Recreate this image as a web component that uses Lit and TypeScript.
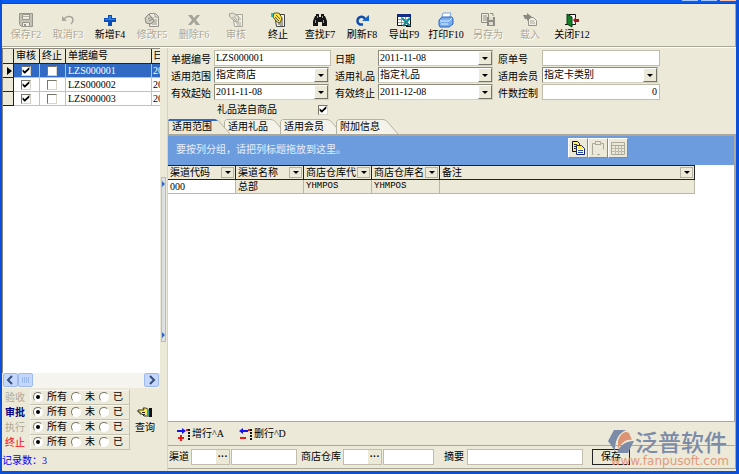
import { LitElement, html, css, svg } from "lit";
import { customElement, property, state } from "lit/decorators.js";
import { classMap } from "lit/directives/class-map.js";

const icons: Record<string, unknown> = {
  save: svg`<path d="M1.500 1.500h13v13h-11l-2-2z" fill="#c4c2b6" stroke="#98968a"/><path d="M4.500 2.500h7v5h-7z" fill="#efede2" stroke="#98968a"/><path d="M5 4.500h6" stroke="#b5b3a8"/><path d="M4.500 10.500h7v4h-7z" fill="#efede2" stroke="#98968a"/><path d="M6 12h2v2H6z" fill="#98968a"/>`,
  undo: svg`<path d="M4 7c3-4 9-3 9 1 0 2-1 3-2 4" fill="none" stroke="#a9a79b" stroke-width="1.500"/><path d="M2 4v5h5z" fill="#a9a79b"/>`,
  add: svg`<path d="M6 3h4v3h4v4h-4v4H6v-4H2V6h4z" fill="#0a4fb8"/><path d="M7 4h2v3h4v1H3V7h4z" fill="#2f80ea"/>`,
  edit: svg`<path d="M5.500 1.500h6l3 3v10h-9z" fill="#f0eee4" stroke="#96948a"/><path d="M11 2v3h3M7 6h3M9 8h4M8 10h5M8 12h5" stroke="#96948a" fill="none"/><path d="M1 6l4-4 5 7-3 3-5-1z" fill="#cfcdc2" stroke="#8f8d83"/><path d="M4 7l4-2M5 9l4-2" stroke="#8f8d83"/>`,
  del: svg`<path d="M2 3h4l2 3 3-3h3l-4 5 4 5h-4l-2-3-3 3H2l4-5z" fill="#a6a499"/>`,
  audit: svg`<path d="M4.500 2.500h10v12h-8z" fill="#f0eee4" stroke="#aaa89d"/><path d="M1 2l4-1 6 4-1 5-4-1-4-4z" fill="#e4e2d6" stroke="#a5a398"/><path d="M6 4l3 4M4 5l4 4M8 11h5M11 7h2M9 13h4" stroke="#aaa89d"/>`,
  stop: svg`<path d="M4.500 2.500h10v12h-8z" fill="#f4f2e8" stroke="#444"/><path d="M1 1h4v4H1z" fill="#20c8c8"/><path d="M4 1h5l3 5-2 5-3-1-4-5z" fill="#ffe43c" stroke="#3b3608" stroke-width=".8"/><path d="M6 3l4 4M5 5l4 4M8 12h5M12 6v5M10 14h3" stroke="#555"/>`,
  find: svg`<path d="M3 4h1V2h3v3h2V2h3v2h1l2 5v5h-5v-4H6v4H1V9z" fill="#161616"/><path d="M3.500 8v3M11.500 8v3M5.500 4v2M10.500 4v2" stroke="#999"/>`,
  refresh: svg`<path d="M9 12.500H6A4 4 0 1 1 11 7" fill="none" stroke="#0b4db0" stroke-width="2.600"/><path d="M8 9h7V3z" fill="#1763cf"/>`,
  export: svg`<path d="M1.500 2.500h13v11h-13z" fill="#fff" stroke="#111"/><path d="M1 2h14v3H1z" fill="#142a86"/><path d="M2 7.500h12M2 10.500h8M5.500 5v8M9.500 5v7" stroke="#999"/><path d="M6 6l8 8M14 6l-7 8" stroke="#078f9c" stroke-width="2"/><path d="M10 14.500h5" stroke="#111"/>`,
  print: svg`<path d="M5 1h8l-2 6H3z" fill="#fff" stroke="#77a7e8"/><path d="M1 8l3-3h10l1 2v5l-4 3H2l-1-2z" fill="#78aef1" stroke="#2d65bc"/><path d="M2 9h9l3-3M3 12h7" fill="none" stroke="#e3efff"/>`,
  saveas: svg`<path d="M1.500 1.500h7v9h-7z" fill="#eae8dc" stroke="#8f8d83"/><path d="M3 4h4M3 6h4M3 8h4" stroke="#9a988d"/><path d="M7 5h8v9H7z" fill="#8f8d83"/><path d="M9 5h4v3H9zM9 10h4v3H9z" fill="#dedccf"/><path d="M10 1.500h3V4" fill="none" stroke="#8f8d83"/>`,
  load: svg`<path d="M6.500 5.500h5l3 3v5h-8z" fill="#efede2" stroke="#96948a"/><path d="M8 9h4M8 11h5" stroke="#aaa89d"/><path d="M1 3h4V1l5 4-5 4V7H3z" fill="#8b897f"/>`,
  close: svg`<path d="M4.500 2.500h7v10h-9M1 12.500h3" fill="#fff" stroke="#111"/><path d="M3 2l5 3v10l-5-3z" fill="#138025" stroke="#073d10"/><path d="M9 8l3-3v2h3v3h-3v2z" fill="#a61420"/>`,
  hand: svg`<path d="M1 5h6l-1-2h3l3 2v6H7L5 9H3V7H1z" fill="#ffe750" stroke="#222" stroke-width=".9"/><path d="M5 7.500h3M6 9.500h2" stroke="#222"/><path d="M12 3h3v9h-3z" fill="#111"/><path d="M10 4h2v7h-2z" fill="#1fa9b4"/>`,
  rowAdd: svg`<path d="M1 4h5V2l4 3-4 3V6H1z" fill="#1414f0"/><path d="M4 9h2v2h2v2H6v2H4v-2H2v-2h2z" fill="#f01818"/><path d="M13 3v12" stroke="#111" stroke-width="2" stroke-dasharray="2 1"/><path d="M10 3h2v2h-2z" fill="#f01818"/>`,
  rowDel: svg`<path d="M10 4H5V2L1 5l4 3V6h5z" fill="#1414f0"/><path d="M2 11h6v2H2z" fill="#f01818"/><path d="M13 3v12" stroke="#111" stroke-width="2" stroke-dasharray="2 1"/><path d="M10 3h2v2h-2z" fill="#f01818"/>`,
  copy: svg`<path d="M2.500 1.500h5l2 2v8h-7z" fill="#ffee62" stroke="#111"/><path d="M4 4.500h3M4 6.500h4M4 8.500h4" stroke="#333"/><path d="M6.500 5.500h5l3 3v6h-8z" fill="#fff" stroke="#15246a"/><path d="M8 6h3l3 3h-6z" fill="#ffe94e"/><path d="M8 10.500h5M8 12.500h5" stroke="#2448b8"/>`,
  paste: svg`<path d="M3.500 14.500h-1v-11h3v-2h5v2h3v6M5 4.500h6M7 14.500h3" fill="none" stroke="#aaa89b"/>`,
  calendar: svg`<path d="M1.500 2.500h13v12h-13zM2 5.500h12" fill="none" stroke="#aaa89b"/><path d="M2 8.500h12M2 11.500h12M5.500 6v8M8.500 6v8M11.500 6v8" stroke="#bbb9ad"/>`,
};

@customElement("ui-icon")
class UiIcon extends LitElement {
  @property() name = "";
  static styles = css`
    :host { display: block; width: 16px; height: 16px; flex: none; }
    .art { display: block; width: 100%; height: 100%; }
  `;
  render() {
    return html`<svg class="art" viewBox="0 0 16 16" aria-hidden="true">${icons[this.name]}</svg>`;
  }
}

interface Field {
  id: string;
  label: string;
  value: string;
  kind: "text" | "combo" | "number";
}

@customElement("app-root")
class AppRoot extends LitElement {
  @state() tab = 0;

  tools: [string, string, boolean][] = [
    ["save", "保存F2", false], ["undo", "取消F3", false], ["add", "新增F4", true],
    ["edit", "修改F5", false], ["del", "删除F6", false], ["audit", "审核", false],
    ["stop", "终止", true], ["find", "查找F7", true], ["refresh", "刷新F8", true],
    ["export", "导出F9", true], ["print", "打印F10", true], ["saveas", "另存为", false],
    ["load", "载入", false], ["close", "关闭F12", true],
  ];

  fields: Field[] = [
    { id: "no", label: "单据编号", value: "LZS000001", kind: "text" },
    { id: "date", label: "日期", value: "2011-11-08", kind: "combo" },
    { id: "orig", label: "原单号", value: "", kind: "text" },
    { id: "scope", label: "适用范围", value: "指定商店", kind: "combo" },
    { id: "gift", label: "适用礼品", value: "指定礼品", kind: "combo" },
    { id: "member", label: "适用会员", value: "指定卡类别", kind: "combo" },
    { id: "from", label: "有效起始", value: "2011-11-08", kind: "combo" },
    { id: "to", label: "有效终止", value: "2011-12-08", kind: "combo" },
    { id: "count", label: "件数控制", value: "0", kind: "number" },
  ];

  static styles = css`
    * { box-sizing: border-box; }
    :host {
      box-sizing: border-box;
      display: flex; flex-direction: column; min-height: 100vh; position: relative;
      background: #ece9d8; color: #000; border: solid #0a50dc; border-width: 0 3px 3px 2px;
      font: 10px/14px "Liberation Serif", "Noto Sans CJK SC", sans-serif;
    }
    button, input, select { font: inherit; color: inherit; margin: 0; padding: 0; border-radius: 0; }
    button { background: none; border: 0; white-space: nowrap; }
    input, select { min-width: 0; outline: 0; }
    .title { height: 4px; background: #0a5cf0; border-bottom: 1px solid #1248b4; display: flex; justify-content: flex-end; gap: 3px; }
    .cap { width: 16px; height: 1px; background: #a9c8ff; }
    .cap.x { background: #ffc0a8; }
    .toolbar { display: flex; height: 43px; padding: 8px 0 0 3px; border-bottom: 1px solid #aca899; border-right: 1px solid #aca899; }
    .tool { width: 42px; height: 32px; display: flex; flex-direction: column; align-items: center; }
    .tool:disabled { color: #aca899; text-shadow: 1px 1px #fff; }
    .main { flex: 1; display: flex; border-top: 1px solid #fff; }
    .left { width: 158px; display: flex; flex-direction: column; }
    .list { flex: 1; background: #fff; border: solid #8c897c; border-width: 1px 0 0 1px; }
    table { border-collapse: separate; border-spacing: 0; table-layout: fixed; }
    th, td { font-weight: normal; text-align: left; padding: 0; white-space: nowrap; overflow: hidden; }
    .docs { width: 100%; }
    .docs .mark { width: 11px; } .docs .tick { width: 26px; } .docs .date { width: 8px; }
    .docs th { height: 15px; background: #ece9d8; border: solid #222; border-width: 0 1px 1px 0; padding-left: 2px; line-height: 14px; }
    .docs td { height: 14px; border: solid #c5c2b4; border-width: 0 1px 1px 0; padding-left: 2px; line-height: 13px; }
    .docs th.date, .docs td.date { padding-left: 1px; border-right: 0; }
    .docs td.mark { background: #ece9d8; border-color: #222; padding-left: 4px; }
    .docs td.tick { padding: 0 7px; }
    .docs .on td:not(.mark) { background: #316ac5; color: #fff; }
    .ptr { width: 0; height: 0; border: solid transparent; border-width: 4px 0 4px 5px; border-left-color: #000; }
    .box { appearance: none; display: block; width: 10px; height: 10px; background: #fff; border: 1px solid #d8d5c8; border-top-color: #77756a; border-left-color: #77756a; }
    .box:checked::before { content: ""; display: block; width: 8px; height: 8px; background: #000; clip-path: polygon(8% 35%, 35% 58%, 92% 5%, 92% 38%, 35% 92%, 8% 65%); }
    .scroll { height: 15px; display: flex; background: #f5f4ee; margin: 0 1px; }
    .sb { width: 15px; height: 14px; border: 1px solid #9db9ef; border-radius: 2px; background: #c6d7fc; color: #33507c; }
    .sb .art { display: block; width: 13px; height: 12px; }
    .sb.end { margin-left: auto; }
    .foot { display: flex; padding-top: 2px; }
    .filters { display: grid; grid-template-columns: 28px 100px; grid-auto-rows: 15px; }
    .flabel { padding-left: 3px; line-height: 15px; color: #aca899; }
    .flabel.navy { color: #000080; font-weight: bold; } .flabel.red { color: #f00; }
    .group { display: flex; gap: 4px; padding-left: 3px; border: 1px solid #c5c2b4; border-width: 0 1px 1px 0; box-shadow: inset 1px 1px #f8f6ee; }
    .opt { display: flex; align-items: center; gap: 4px; line-height: 14px; white-space: nowrap; }
    .radio { appearance: none; width: 10px; height: 10px; border-radius: 50%; background: #fff; border: 1px solid #fff; border-top-color: #77756a; border-left-color: #77756a; display: grid; place-items: center; }
    .radio:checked::before { content: ""; width: 4px; height: 4px; border-radius: 50%; background: #000; }
    .query { flex: 1; display: flex; flex-direction: column; align-items: center; justify-content: center; }
    .total { color: #00f; height: 21px; line-height: 22px; }
    .split { width: 7px; display: flex; flex-direction: column; justify-content: center; align-items: center; }
    .grip { width: 5px; height: 39%; background: #dce0e3; border: 1px solid #b7bdc5; display: flex; flex-direction: column; justify-content: space-between; padding: 3px 0; }
    .nub { border: solid transparent; border-width: 3px 0 3px 3px; border-left-color: #316ac5; }
    .right { flex: 1; min-width: 0; display: flex; flex-direction: column; border-left: 1px solid #d6d3c5; }
    .form { display: grid; grid-template-columns: 43px 117px 47px 115px 49px 118px; grid-auto-rows: 17px; padding: 2px 0 0 3px; height: 71px; }
    .lab { line-height: 19px; white-space: nowrap; }
    .lab.gapped { padding-left: 4px; }
    .lab.wide { padding-left: 5px; }
    .txt { width: 100%; height: 16px; background: #fff; border: 1px solid #c0bdad; padding: 0 2px 1px 1px; }
    .txt.num { text-align: right; }
    .combo { display: flex; position: relative; height: 16px; margin-right: 2px; background: #fff; border: 1px solid #8c897c; border-right-color: #d4d0c0; border-bottom-color: #d4d0c0; }
    .combo.full { margin-right: 0; }
    .sel { appearance: none; width: 100%; height: 14px; border: 0; background: transparent; padding: 0 16px 1px 1px; line-height: 13px; }
    .drop { position: absolute; right: 0; top: 0; width: 14px; height: 14px; background: #ece9d8; border: 1px solid #fff; border-right-color: #77756a; border-bottom-color: #77756a; pointer-events: none; display: grid; place-items: center; }
    .drop::before { content: ""; border: solid transparent; border-width: 3px 3px 0; border-top-color: #000; }
    .pick { grid-column: 1 / 3; display: flex; align-items: center; justify-content: space-between; padding: 0 3px 0 46px; }
    .tabs { display: flex; height: 15px; }
    .tab { position: relative; width: 56px; height: 15px; text-align: left; padding-left: 4px; line-height: 15px; }
    .tab.active { z-index: 1; }
    .tab .shape { position: absolute; left: 0; top: 0; width: 64px; height: 15px; }
    .tab .name { position: relative; }
    .face { fill: #f4f2e9; stroke: #b5b2a3; } .active .face { fill: #ece9d8; }
    .edge { fill: none; } .active .edge { fill: #316ac5; }
    .sheet { flex: 1; display: flex; flex-direction: column; background: #fff; border: solid #aca899; border-width: 2px 2px 1px 0; }
    .hint { height: 29px; background: #6c9cde; color: #e8eefa; display: flex; align-items: flex-start; justify-content: space-between; padding: 2px 106px 0 8px; }
    .msg { line-height: 24px; }
    .minis { display: flex; }
    .mini { width: 20px; height: 20px; background: #ece9d8; border: 1px solid #fff; border-right-color: #8c897c; border-bottom-color: #8c897c; display: grid; place-items: center; }
    .data { width: 527px; max-width: 100%; }
    .data th { height: 15px; background: #ece9d8; border: solid #222; border-width: 1px 1px 1px 0; padding-left: 2px; width: 68px; }
    .data th.wide { width: auto; }
    .head { display: flex; justify-content: space-between; line-height: 14px; height: 13px; }
    .flt { flex: none; width: 13px; height: 11px; margin: 1px 1px 0 0; border: 1px solid #b5b2a3; display: grid; place-items: center; }
    .flt::before { content: ""; border: solid transparent; border-width: 3px 3px 0; border-top-color: #000; }
    .data td { height: 14px; background: #ece9d8; border: solid #bab7a8; border-width: 0 1px 1px 0; padding-left: 2px; line-height: 13px; }
    .data td.cur { background: #fff; }
    .data td.code { font-family: "Liberation Mono", monospace; font-size: 9px; }
    .rows { height: 24px; display: flex; align-items: center; gap: 14px; padding-left: 8px; border: 1px solid #aca899; border-width: 0 1px 1px 0; }
    .row { display: flex; align-items: center; }
    .entry { height: 23px; display: flex; align-items: center; border: 1px solid #aca899; border-width: 0 1px 1px 0; padding-left: 1px; margin-bottom: 2px; }
    .entry .txt { width: 66px; }
    .look { display: flex; width: 39px; height: 16px; margin: 0 1px 0 2px; background: #fff; border: 1px solid #c0bdad; }
    .look .in2 { flex: 1; width: 24px; border: 0; background: none; }
    .more { width: 13px; background: #ece9d8; font-weight: bold; line-height: 8px; }
    .entry .mid { width: 51px; } .entry .long { width: 116px; margin: 0 9px 0 3px; }
    .gap { margin-left: 4px; } .far { margin-left: 10px; }
    .ok { width: 38px; height: 16px; border: 1px solid #222; text-align: left; padding-left: 8px; line-height: 14px; }
    .brand { position: absolute; right: 4px; bottom: 3px; width: 124px; pointer-events: none; }
    .line { display: flex; align-items: center; gap: 1px; height: 28px; }
    .logo { width: 27px; height: 25px; flex: none; margin-left: -1px; }
    .bname { font: 500 23px/28px "Noto Sans CJK SC", sans-serif; color: #7c8ba8; white-space: nowrap; }
    .url { display: flex; justify-content: flex-end; padding-right: 3px; font: 12px/13px "DejaVu Sans", sans-serif; color: #e09a7c; white-space: nowrap; }
  `;

  renderField(f: Field, i: number) {
    const col = i % 3;
    return html`<label class=${classMap({ lab: true, gapped: col === 1, wide: col === 2 })} for=${f.id}>${f.label}</label>
      ${f.kind === "combo"
        ? html`<span class=${classMap({ combo: true, full: col === 1 })}><select class="sel" id=${f.id}><option>${f.value}</option></select><span class="drop"></span></span>`
        : html`<input class=${classMap({ txt: true, num: f.kind === "number" })} id=${f.id} .value=${f.value}>`}`;
  }

  renderFilter(label: string, tone: string, id: number) {
    return html`<span class="flabel ${tone}" id="f${id}">${label}</span>
      <div class="group" role="radiogroup" aria-labelledby="f${id}">
        ${["所有", "未", "已"].map((o, i) => html`<label class="opt"><input class="radio" type="radio" name="r${id}" ?checked=${i === 0}>${o}</label>`)}
      </div>`;
  }

  render() {
    return html`
      <div class="title"><span class="cap"></span><span class="cap"></span><span class="cap x"></span></div>
      <nav class="toolbar">
        ${this.tools.map(([icon, label, on]) => html`<button class="tool" ?disabled=${!on}><ui-icon name=${icon}></ui-icon>${label}</button>`)}
      </nav>
      <div class="main">
        <aside class="left">
          <div class="list">
            <table class="docs">
              <thead><tr><th class="mark"></th><th class="tick">审核</th><th class="tick">终止</th><th>单据编号</th><th class="date">日</th></tr></thead>
              <tbody>
                ${["LZS000001", "LZS000002", "LZS000003"].map((n, i) => html`<tr class=${classMap({ on: i === 0 })}>
                  <td class="mark">${i === 0 ? html`<div class="ptr"></div>` : ""}</td>
                  <td class="tick"><input class="box" type="checkbox" checked aria-label="审核"></td>
                  <td class="tick"><input class="box" type="checkbox" aria-label="终止"></td>
                  <td>${n}</td><td class="date">20</td></tr>`)}
              </tbody>
            </table>
          </div>
          <div class="scroll">
            <button class="sb" aria-label="向左"><svg class="art" viewBox="0 0 13 12"><path d="M8 2L4 6l4 4" fill="none" stroke="currentColor" stroke-width="2"/></svg></button>
            <button class="sb" aria-label="滑块"><svg class="art" viewBox="0 0 13 12"><path d="M3.500 3v6M5.500 3v6M7.500 3v6M9.500 3v6" stroke="#9ab6ee"/></svg></button>
            <button class="sb end" aria-label="向右"><svg class="art" viewBox="0 0 13 12"><path d="M5 2l4 4-4 4" fill="none" stroke="currentColor" stroke-width="2"/></svg></button>
          </div>
          <div class="foot">
            <div class="filters">
              ${this.renderFilter("验收", "", 1)}${this.renderFilter("审批", "navy", 2)}
              ${this.renderFilter("执行", "", 3)}${this.renderFilter("终止", "red", 4)}
            </div>
            <button class="query"><ui-icon name="hand"></ui-icon>查询</button>
          </div>
          <div class="total">记录数：3</div>
        </aside>
        <div class="split"><div class="grip"><span class="nub"></span><span class="nub"></span></div></div>
        <section class="right">
          <form class="form">
            ${this.fields.map((f, i) => this.renderField(f, i))}
            <label class="pick">礼品选自商品<input class="box" type="checkbox" checked></label>
          </form>
          <div class="tabs" role="tablist">
            ${["适用范围", "适用礼品", "适用会员", "附加信息"].map((t, i) => html`<button class=${classMap({ tab: true, active: this.tab === i })} role="tab" @click=${() => (this.tab = i)}>
              <svg class="shape" viewBox="0 0 64 15"><path class="face" d="M.5 15V2.500l2-2H47q3 0 5 3L62 15"/><path class="edge" d="M1 0h46l3 2H0z"/></svg><span class="name">${t}</span></button>`)}
          </div>
          <div class="sheet">
            <div class="hint"><span class="msg">要按列分组，请把列标题拖放到这里。</span>
              <div class="minis">
                <button class="mini" aria-label="复制"><ui-icon name="copy"></ui-icon></button>
                <button class="mini" aria-label="粘贴"><ui-icon name="paste"></ui-icon></button>
                <button class="mini" aria-label="日历"><ui-icon name="calendar"></ui-icon></button>
              </div>
            </div>
            <table class="data">
              <thead><tr>${["渠道代码", "渠道名称", "商店仓库代", "商店仓库名", "备注"].map((h, i) => html`<th class=${classMap({ wide: i === 4 })}><div class="head"><span>${h}</span><span class="flt"></span></div></th>`)}</tr></thead>
              <tbody><tr><td class="cur">000</td><td>总部</td><td class="code">YHMPOS</td><td class="code">YHMPOS</td><td></td></tr></tbody>
            </table>
          </div>
          <div class="rows">
            <button class="row"><ui-icon name="rowAdd"></ui-icon>增行^A</button>
            <button class="row"><ui-icon name="rowDel"></ui-icon>删行^D</button>
          </div>
          <div class="entry">
            <label for="ch">渠道</label>
            <span class="look"><input class="in2" id="ch"><button class="more" aria-label="选择渠道">···</button></span>
            <input class="txt" aria-label="渠道名称">
            <label class="gap" for="st">商店仓库</label>
            <span class="look"><input class="in2" id="st"><button class="more" aria-label="选择商店仓库">···</button></span>
            <input class="txt mid" aria-label="商店仓库名称">
            <label class="far" for="memo">摘要</label>
            <input class="txt long" id="memo">
            <button class="ok">保存</button>
          </div>
        </section>
      </div>
      <div class="brand">
        <div class="line">
          <svg class="logo" viewBox="0 0 27 25"><path d="M7 1h12C10 5 8 13 8 22L1 12z" fill="#7c8ba8"/><path d="M11 12C13 5 18 1 22 4l3 7c-5-1-10 2-14 9z" fill="#dc9474"/><path d="M10 24c2-7 8-12 17-12l-6 12z" fill="#7c8ba8"/></svg>
          <span class="bname">泛普软件</span>
        </div>
        <span class="url">www.fanpusoft.com</span>
      </div>`;
  }
}
